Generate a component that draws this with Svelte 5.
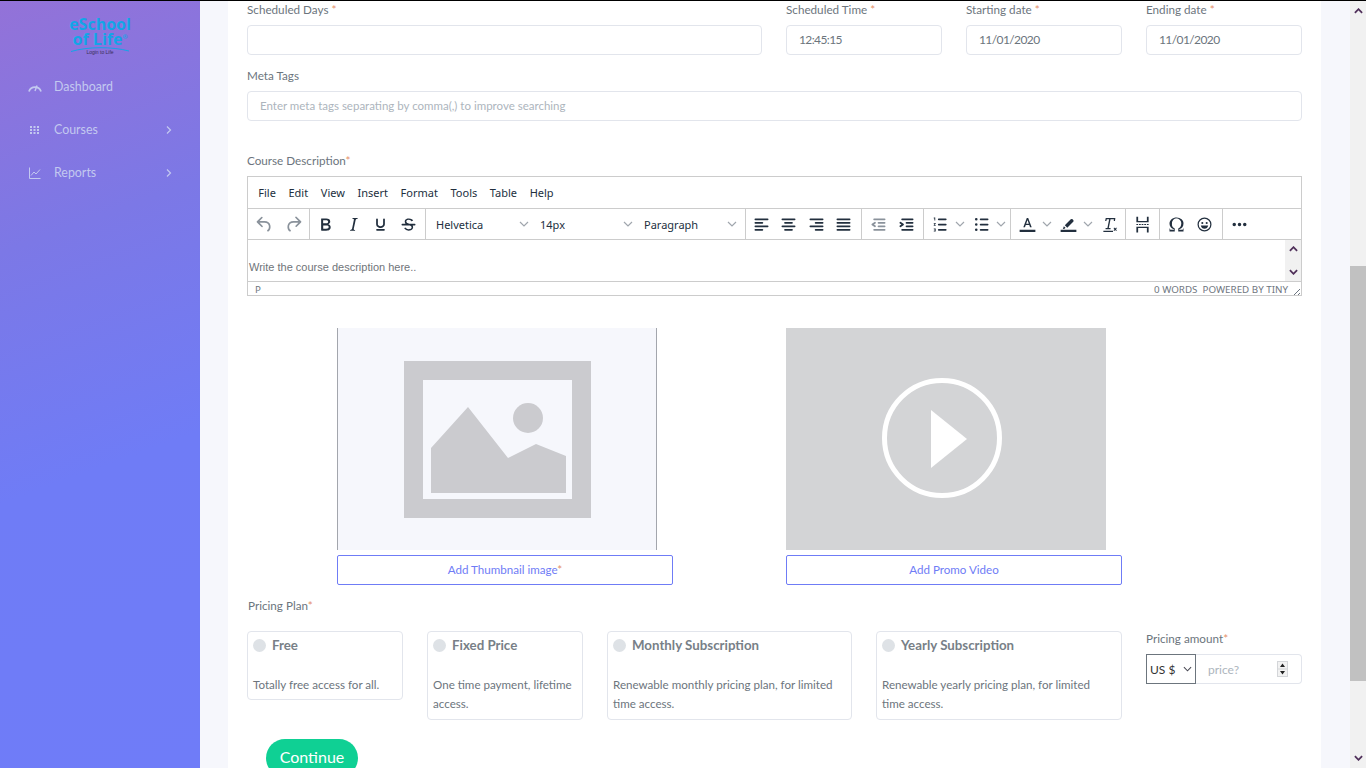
<script>
  const nav = [
    { label: "Dashboard", icon: "gauge" },
    { label: "Courses", icon: "grid", arrow: true },
    { label: "Reports", icon: "chart", arrow: true },
  ];

  const menus = ["File", "Edit", "View", "Insert", "Format", "Tools", "Table", "Help"];

  const plans = [
    { title: "Free", text: "Totally free access for all.", cls: "small" },
    { title: "Fixed Price", text: "One time payment, lifetime access.", cls: "small" },
    { title: "Monthly Subscription", text: "Renewable monthly pricing plan, for limited time access.", cls: "wide" },
    { title: "Yearly Subscription", text: "Renewable yearly pricing plan, for limited time access.", cls: "wider" },
  ];

  // tinymce style icons, 24x24
  const paths = {
    undo: "M6.4 8H12c3.7 0 6.2 2 6.8 5.1.6 2.7-.4 5.6-2.3 6.8a1 1 0 0 1-1-1.8c1.1-.6 1.8-2.7 1.4-4.6-.5-2.1-2.1-3.5-4.9-3.5H6.4l3.3 3.3a1 1 0 1 1-1.4 1.4l-5-5a1 1 0 0 1 0-1.4l5-5a1 1 0 0 1 1.4 1.4L6.4 8Z",
    redo: "M17.6 10H12c-2.8 0-4.4 1.4-4.9 3.5-.4 2 .3 4 1.4 4.6a1 1 0 1 1-1 1.8c-2-1.2-2.9-4.1-2.3-6.8.6-3 3-5.1 6.8-5.1h5.6l-3.3-3.3a1 1 0 1 1 1.4-1.4l5 5a1 1 0 0 1 0 1.4l-5 5a1 1 0 0 1-1.4-1.4l3.3-3.3Z",
    bold: "M7.8 19c-.3 0-.5 0-.6-.2l-.2-.5V5.7c0-.2 0-.4.2-.5l.6-.2h5c1.5 0 2.7.3 3.5 1 .7.6 1.1 1.4 1.1 2.5a3 3 0 0 1-.6 1.9c-.4.6-1 1-1.6 1.2.4.1.9.3 1.3.6s.8.7 1 1.2c.3.4.4 1 .4 1.6 0 1.3-.4 2.3-1.3 3-.8.7-2.1 1-3.8 1H7.8Zm5-8.3c.6 0 1.2-.1 1.6-.5.4-.3.6-.7.6-1.3 0-1.1-.8-1.7-2.3-1.7H9.3v3.5h3.4Zm.5 6c.7 0 1.3-.1 1.7-.4.4-.4.6-.9.6-1.5s-.2-1-.7-1.4c-.4-.3-1-.4-2-.4H9.4v3.8h4Z",
    italic: "m16.7 4.7-.1.9h-.3c-.6 0-1 0-1.4.3-.3.3-.4.6-.5 1.1l-2.1 9.8v.6c0 .5.4.8 1.4.8h.2l-.2.8H8l.2-.8h.2c1.1 0 1.8-.5 2-1.5l2-9.8.1-.5c0-.6-.4-.8-1.4-.8h-.3l.2-.9h5.8Z",
    underline: "M16 5c.6 0 1 .4 1 1v5.5a4 4 0 0 1-.4 1.8l-1 1.4a5.3 5.3 0 0 1-5.5 1 5 5 0 0 1-1.6-1c-.5-.4-.8-.9-1.1-1.4a4 4 0 0 1-.4-1.8V6c0-.6.4-1 1-1s1 .4 1 1v5.5c0 .3 0 .6.2 1l.6.7a3.3 3.3 0 0 0 2.2.8 3.4 3.4 0 0 0 2.2-.8c.3-.2.4-.5.6-.8l.2-.9V6c0-.6.4-1 1-1ZM8 17h8c.6 0 1 .4 1 1s-.4 1-1 1H8a1 1 0 0 1 0-2Z",
    strike: "M15.6 8.5c-.5-.7-1-1.1-1.3-1.3-.6-.4-1.3-.6-2-.6-2.7 0-2.8 1.7-2.8 2.1 0 1.6 1.8 2 3.2 2.3 4.4.9 4.6 2.8 4.6 3.9 0 1.4-.7 4.1-5 4.1A6.2 6.2 0 0 1 7 16.4l1.5-1.1c.4.6 1.6 2 3.7 2 1.6 0 2.5-.4 3-1 .3-.4.3-.9.3-1.2 0-1.4-1.3-2-3.2-2.3-2-.4-4.6-1.4-4.6-4 0-1.7 1-3.7 4.7-3.7 1.3 0 2.4.2 3.4.9.7.4 1.2 1 1.5 1.5l-1.7.9ZM5 11h14a1 1 0 0 1 0 2H5a1 1 0 0 1 0-2Z",
    left: "M5 5h14c.6 0 1 .4 1 1s-.4 1-1 1H5a1 1 0 1 1 0-2Zm0 4h8c.6 0 1 .4 1 1s-.4 1-1 1H5a1 1 0 1 1 0-2Zm0 8h8c.6 0 1 .4 1 1s-.4 1-1 1H5a1 1 0 0 1 0-2Zm0-4h14c.6 0 1 .4 1 1s-.4 1-1 1H5a1 1 0 0 1 0-2Z",
    center: "M5 5h14c.6 0 1 .4 1 1s-.4 1-1 1H5a1 1 0 1 1 0-2Zm3 4h8c.6 0 1 .4 1 1s-.4 1-1 1H8a1 1 0 1 1 0-2Zm0 8h8c.6 0 1 .4 1 1s-.4 1-1 1H8a1 1 0 0 1 0-2Zm-3-4h14c.6 0 1 .4 1 1s-.4 1-1 1H5a1 1 0 0 1 0-2Z",
    right: "M5 5h14c.6 0 1 .4 1 1s-.4 1-1 1H5a1 1 0 1 1 0-2Zm6 4h8c.6 0 1 .4 1 1s-.4 1-1 1h-8a1 1 0 0 1 0-2Zm0 8h8c.6 0 1 .4 1 1s-.4 1-1 1h-8a1 1 0 0 1 0-2Zm-6-4h14c.6 0 1 .4 1 1s-.4 1-1 1H5a1 1 0 0 1 0-2Z",
    justify: "M5 5h14c.6 0 1 .4 1 1s-.4 1-1 1H5a1 1 0 1 1 0-2Zm0 4h14c.6 0 1 .4 1 1s-.4 1-1 1H5a1 1 0 1 1 0-2Zm0 4h14c.6 0 1 .4 1 1s-.4 1-1 1H5a1 1 0 0 1 0-2Zm0 4h14c.6 0 1 .4 1 1s-.4 1-1 1H5a1 1 0 0 1 0-2Z",
    outdent: "M7 5h12c.6 0 1 .4 1 1s-.4 1-1 1H7a1 1 0 1 1 0-2Zm5 4h7c.6 0 1 .4 1 1s-.4 1-1 1h-7a1 1 0 0 1 0-2Zm0 4h7c.6 0 1 .4 1 1s-.4 1-1 1h-7a1 1 0 0 1 0-2Zm-5 4h12a1 1 0 0 1 0 2H7a1 1 0 0 1 0-2Zm1.6-3.8a1 1 0 0 1-1.2 1.6l-3-2a1 1 0 0 1 0-1.6l3-2a1 1 0 0 1 1.2 1.6L6.8 12l1.8 1.2Z",
    indent: "M7 5h12c.6 0 1 .4 1 1s-.4 1-1 1H7a1 1 0 1 1 0-2Zm5 4h7c.6 0 1 .4 1 1s-.4 1-1 1h-7a1 1 0 0 1 0-2Zm0 4h7c.6 0 1 .4 1 1s-.4 1-1 1h-7a1 1 0 0 1 0-2Zm-5 4h12a1 1 0 0 1 0 2H7a1 1 0 0 1 0-2Zm-2.6-3.8L6.2 12l-1.8-1.2a1 1 0 0 1 1.2-1.6l3 2a1 1 0 0 1 0 1.6l-3 2a1 1 0 1 1-1.2-1.6Z",
    numlist: "M10 17h8c.6 0 1 .4 1 1s-.4 1-1 1h-8a1 1 0 0 1 0-2Zm0-6h8c.6 0 1 .4 1 1s-.4 1-1 1h-8a1 1 0 0 1 0-2Zm0-6h8c.6 0 1 .4 1 1s-.4 1-1 1h-8a1 1 0 1 1 0-2ZM6 4v3.5H5V5h-.7V4H6Zm-1.7 6.2H6.5v.8L5.3 12.600h1.200v.9H4.300v-.8l1.200-1.600h-1.200v-.9Zm0 6.300h2.200v3.500H4.300v-.9h1.200v-.4h-.8v-.8h.8v-.5H4.300v-.9Z",
    bullist: "M11 5h8c.6 0 1 .4 1 1s-.4 1-1 1h-8a1 1 0 0 1 0-2Zm0 6h8c.6 0 1 .4 1 1s-.4 1-1 1h-8a1 1 0 0 1 0-2Zm0 6h8c.6 0 1 .4 1 1s-.4 1-1 1h-8a1 1 0 0 1 0-2ZM4.500 6a1.500 1.500 0 1 1 3 0 1.500 1.500 0 0 1-3 0Zm0 6a1.500 1.500 0 1 1 3 0 1.500 1.500 0 0 1-3 0Zm0 6a1.500 1.500 0 1 1 3 0 1.500 1.500 0 0 1-3 0Z",
    forecolor: "M3 18h18v2.500H3V18Zm8.200-13.500h1.600l4 10.500h-1.900l-.9-2.500H10l-.9 2.500H7.200l4-10.500Zm-.7 6.500h3l-1.500-4.200-1.500 4.200Z",
    hilite: "M3 18h18v2.500H3V18Zm2.500-1 2-.1 1.100-1.100-1.900-1.900-1.200 3.100Zm2.300-4.100 2.800 2.800 6.800-6.800a1.500 1.500 0 0 0 0-2.100l-.7-.7a1.500 1.500 0 0 0-2.100 0l-6.800 6.800Z",
    clear: "M13.200 6 11.200 16h2v1.500H7.500V16h2.100l2-10H8.900l-.5 2H7l.7-3.500h11l-.4 3.500h-1.400l.1-2h-3.800ZM5 19.200h11v1.300H5v-1.300Zm12.400-3.700 1.100 1.100 1.100-1.100.8.8-1.100 1.100 1.100 1.100-.8.8-1.100-1.100-1.100 1.100-.8-.8 1.100-1.100-1.100-1.100.8-.8Z",
    pagebreak: "M5 3h2v5h10V3h2v6.500H5V3Zm0 18h2v-5h10v5h2v-6.500H5V21Zm0-9.700h2v1.400H5v-1.400Zm3 0h2v1.400H8v-1.400Zm3 0h2v1.400h-2v-1.400Zm3 0h2v1.400h-2v-1.400Zm3 0h2v1.400h-2v-1.400Z",
    omega: "M15 18h4l1-2v4h-6v-3.300l1.400-1a6 6 0 0 0 1.800-2.900 6.300 6.300 0 0 0-.1-4.100 5.800 5.800 0 0 0-3-3.200c-.6-.3-1.300-.5-2.100-.5a5.100 5.100 0 0 0-3.900 1.800 6.300 6.300 0 0 0-1.300 6 6.200 6.200 0 0 0 1.800 3l1.400.9V20H4v-4l1 2h4v-.5l-2-1L5.400 15A6.500 6.500 0 0 1 4 11c0-1 .2-1.900.6-2.700A7 7 0 0 1 6.300 6C7.100 5.400 8 5 9 4.500c1-.3 2-.5 3.100-.5a8.800 8.800 0 0 1 5.700 2 7 7 0 0 1 1.700 2.300 6 6 0 0 1 .2 4.800c-.2.700-.6 1.300-1 1.900a7.600 7.600 0 0 1-3.600 2.500v.5Z",
    smile: "M12 20a8 8 0 1 1 0-16 8 8 0 0 1 0 16Zm0-1.400a6.600 6.600 0 1 0 0-13.200 6.600 6.600 0 0 0 0 13.200ZM9.500 11.500a1.200 1.200 0 1 1 0-2.400 1.200 1.200 0 0 1 0 2.400Zm5 0a1.200 1.200 0 1 1 0-2.400 1.200 1.200 0 0 1 0 2.400ZM7.800 13h8.400c-.3 2.300-2 3.800-4.200 3.800S8.100 15.300 7.800 13Z",
    more: "M6 10a2 2 0 1 1 0 4 2 2 0 0 1 0-4Zm6 0a2 2 0 1 1 0 4 2 2 0 0 1 0-4Zm6 0a2 2 0 1 1 0 4 2 2 0 0 1 0-4Z",
  };

  const groups = [
    { cls: "g-hist", items: [{ p: "undo", off: true }, { p: "redo", off: true }] },
    { cls: "g-fmt", items: [{ p: "bold" }, { p: "italic" }, { p: "underline" }, { p: "strike" }] },
    { cls: "g-select", selects: ["Helvetica", "14px", "Paragraph"] },
    { cls: "g-align", items: [{ p: "left" }, { p: "center" }, { p: "right" }, { p: "justify" }] },
    { cls: "g-indent", items: [{ p: "outdent", off: true }, { p: "indent" }] },
    { cls: "g-list", items: [{ p: "numlist", split: true }, { p: "bullist", split: true }] },
    { cls: "g-color", items: [{ p: "forecolor", split: true }, { p: "hilite", split: true }, { p: "clear" }] },
    { cls: "g-break", items: [{ p: "pagebreak" }] },
    { cls: "g-char", items: [{ p: "omega" }, { p: "smile" }] },
    { cls: "g-more", items: [{ p: "more" }] },
  ];
</script>

<div class="page">
  <div class="topline"></div>
  <div class="shell">
    <aside class="sidebar">
      <div class="logo">
        <div class="logo-name">eSchool</div>
        <div class="logo-name">of Life<sup>®</sup></div>
        <svg class="swoosh" viewBox="0 0 60 6" width="60" height="6">
          <path d="M1 5.500C18 .5 42 .5 59 5" fill="none" stroke="#12a5e8" stroke-width="1" />
        </svg>
        <div class="logo-sub">Login to Life</div>
      </div>
      <nav class="nav">
        {#each nav as item}
          <div class="nav-item">
            <svg class="nav-icon" viewBox="0 0 14 14" width="14" height="14" fill="none" stroke="currentColor">
              {#if item.icon === "gauge"}
                <path d="M1 11.500a6.300 6.300 0 0 1 12 0" stroke-width="1.800" />
                <path d="M7 11 9 5.500" stroke-width="1.400" />
              {:else if item.icon === "grid"}
                <path d="M2 4h10M2 7h10M2 10h10" stroke-width="1.800" stroke-dasharray="2 1.500" />
              {:else}
                <path d="M1.500 1.500v11h11" stroke-width="1" />
                <path d="M3 9.500 6 6l2 2 4-4.500" stroke-width="1" />
              {/if}
            </svg>
            <span class="nav-label">{item.label}</span>
            {#if item.arrow}
              <svg class="nav-arrow" viewBox="0 0 8 10" width="8" height="10">
                <path d="M2 1.500 5.500 5 2 8.500" fill="none" stroke="currentColor" stroke-width="1.200" />
              </svg>
            {/if}
          </div>
        {/each}
      </nav>
    </aside>

    <main class="main">
      <div class="card">
        <div class="row-schedule">
          <div class="field">
            <div class="label">Scheduled Days <span class="req">*</span></div>
            <div class="input"></div>
          </div>
          <div class="field">
            <div class="label">Scheduled Time <span class="req">*</span></div>
            <div class="input date">12:45:15</div>
          </div>
          <div class="field">
            <div class="label">Starting date <span class="req">*</span></div>
            <div class="input date">11/01/2020</div>
          </div>
          <div class="field">
            <div class="label">Ending date <span class="req">*</span></div>
            <div class="input date">11/01/2020</div>
          </div>
        </div>

        <div class="field meta">
          <div class="label">Meta Tags</div>
          <div class="input placeholder">Enter meta tags separating by comma(,) to improve searching</div>
        </div>

        <div class="field desc">
          <div class="label">Course Description<span class="req">*</span></div>
          <div class="editor">
            <div class="menubar">
              {#each menus as m}
                <span class="menu">{m}</span>
              {/each}
            </div>
            <div class="toolbar">
              {#each groups as g}
                <div class="tgroup {g.cls}">
                  {#if g.selects}
                    {#each g.selects as s}
                      <div class="tselect">
                        <span>{s}</span>
                        <svg viewBox="0 0 10 6" width="10" height="6"><path d="M1 1l4 4 4-4" fill="none" stroke="#a0a6ad" stroke-width="1.200" /></svg>
                      </div>
                    {/each}
                  {:else}
                    {#each g.items as it}
                      <div class="tbtn" class:split={it.split} class:off={it.off}>
                        <svg viewBox="0 0 24 24" width="21" height="21"><path d={paths[it.p]} fill="currentColor" /></svg>
                        {#if it.split}
                          <svg class="chev" viewBox="0 0 10 6" width="10" height="6"><path d="M1 1l4 4 4-4" fill="none" stroke="#a0a6ad" stroke-width="1.200" /></svg>
                        {/if}
                      </div>
                    {/each}
                  {/if}
                </div>
              {/each}
            </div>
            <div class="edit-area">
              <div class="edit-text">Write the course description here..</div>
              <div class="edit-scroll">
                <svg viewBox="0 0 10 6" width="9" height="6"><path d="M1 5l4-4 4 4" fill="none" stroke="#50305a" stroke-width="2" /></svg>
                <svg viewBox="0 0 10 6" width="9" height="6"><path d="M1 1l4 4 4-4" fill="none" stroke="#50305a" stroke-width="2" /></svg>
              </div>
            </div>
            <div class="statusbar">
              <span class="path">P</span>
              <span class="status-right">0 WORDS</span>
              <span class="status-brand">POWERED BY TINY</span>
              <svg class="grip" viewBox="0 0 9 9" width="9" height="9"><path d="M8 2 2 8M8 6 6 8" stroke="#6b7480" stroke-width="1" fill="none" /></svg>
            </div>
          </div>
        </div>

        <div class="media-row">
          <div class="media-col thumb-col">
            <div class="thumb">
              <svg viewBox="0 0 318 222" width="318" height="222">
                <path fill="#cbcbcf" fill-rule="evenodd" d="M66 33h187v157H66V33Zm19 19v119h149V52H85Z" />
                <path fill="#cbcbcf" d="M93 120l37-41 40 51 28-14 30 12v37H93Z" />
                <circle cx="190" cy="90" r="15" fill="#cbcbcf" />
              </svg>
            </div>
            <div class="add-btn">Add Thumbnail image<span class="req">*</span></div>
          </div>
          <div class="media-col">
            <div class="video">
              <svg viewBox="0 0 320 222" width="320" height="222">
                <circle cx="156" cy="110" r="57.500" fill="none" stroke="#fff" stroke-width="5" />
                <path d="M145 82l36 29-36 29Z" fill="#fff" />
              </svg>
            </div>
            <div class="add-btn">Add Promo Video</div>
          </div>
        </div>

        <div class="label pricing-label">Pricing Plan<span class="req">*</span></div>
        <div class="pricing-row">
          {#each plans as plan}
            <div class="plan {plan.cls}">
              <div class="plan-head">
                <span class="radio"></span>
                <span class="plan-title">{plan.title}</span>
              </div>
              <div class="plan-text">{plan.text}</div>
            </div>
          {/each}
          <div class="amount">
            <div class="label amount-label">Pricing amount<span class="req">*</span></div>
            <div class="amount-group">
              <div class="currency">
                <span>US $</span>
                <svg viewBox="0 0 10 6" width="9" height="6"><path d="M1 1l4 4 4-4" fill="none" stroke="#4a4a55" stroke-width="1.200" /></svg>
              </div>
              <div class="price">
                <span>price?</span>
                <div class="spin">
                  <svg viewBox="0 0 11 16" width="11" height="16">
                    <rect width="11" height="16" fill="#d4d6d9" />
                    <rect x="1" y="1" width="9" height="6.500" fill="#f2f2f2" />
                    <rect x="1" y="8.500" width="9" height="6.500" fill="#f2f2f2" />
                    <path d="M5.500 2.500 8 6H3ZM5.500 13.500 8 10H3Z" fill="#222" />
                  </svg>
                </div>
              </div>
            </div>
          </div>
        </div>

        <div class="continue">Continue</div>
      </div>
    </main>

    <div class="scrollbar">
      <svg class="sb-up" viewBox="0 0 10 6" width="9" height="6"><path d="M1 5l4-4 4 4" fill="none" stroke="#50305a" stroke-width="2" /></svg>
      <div class="sb-thumb"></div>
      <svg class="sb-down" viewBox="0 0 10 6" width="9" height="6"><path d="M1 1l4 4 4-4" fill="none" stroke="#50305a" stroke-width="2" /></svg>
    </div>
  </div>
</div>

<style>
  :global(html), :global(body) {
    margin: 0;
    height: 768px;
    overflow: hidden;
  }

  .page {
    height: 768px;
    overflow: hidden;
    display: flex;
    flex-direction: column;
    font-family: "Lato", "Open Sans", sans-serif;
    color: #6c757d;
    background: #f6f7fc;
  }

  .topline {
    height: 1px;
    flex: none;
    background: #000;
  }

  .shell {
    flex: 1;
    min-height: 0;
    display: flex;
  }

  /* sidebar */
  .sidebar {
    width: 200px;
    flex: none;
    background: linear-gradient(160deg, #9372d8 0%, #7c78e6 30%, #6f7cf6 60%, #6f7cf8 100%);
    color: #c3c9f0;
  }

  .logo {
    padding-top: 16px;
    display: flex;
    flex-direction: column;
    align-items: center;
    color: #12a5e8;
    height: 40px;
  }

  .logo-name {
    font-size: 16px;
    font-weight: 700;
    line-height: 15px;
    font-family: "Open Sans", sans-serif;
  }

  .logo-name sup {
    font-size: 6px;
    line-height: 0;
  }

  .swoosh {
    margin-top: -1px;
  }

  .logo-sub {
    font-size: 5px;
    line-height: 5px;
    margin-top: -2px;
    color: #3a2f55;
    font-family: "Liberation Sans", sans-serif;
  }

  .nav {
    padding-top: 8px;
  }

  .nav-item {
    height: 43px;
    display: flex;
    align-items: center;
    padding-left: 28px;
    font-size: 12.400px;
    position: relative;
  }

  .nav-icon {
    flex: none;
    margin-right: 12px;
  }

  .nav-arrow {
    margin-left: auto;
    margin-right: 27px;
  }

  /* main card */
  .main {
    flex: 1;
    min-width: 0;
    padding: 0 29px 0 28px;
  }

  .card {
    background: #fff;
    height: 100%;
    padding: 0 19px;
    box-sizing: border-box;
    overflow: hidden;
  }

  .row-schedule {
    display: grid;
    grid-template-columns: 515px 156px 156px 156px;
    column-gap: 24px;
  }

  .label {
    font-size: 11.700px;
    line-height: 15px;
    color: #6c757d;
    margin-bottom: 9px;
  }

  .row-schedule .label {
    padding-top: 1px;
    margin-bottom: 8px;
  }

  .req {
    color: #e58f6b;
  }

  .input {
    height: 30px;
    box-sizing: border-box;
    border: 1px solid #e2e5ec;
    border-radius: 4px;
    padding: 0 12px;
    font-size: 12px;
    line-height: 28px;
    color: #6c757d;
  }

  .date {
    letter-spacing: -0.600px;
  }

  .placeholder {
    font-size: 11.500px;
    color: #adb5bd;
  }

  .meta {
    margin-top: 13px;
  }

  .meta .label {
    margin-bottom: 8px;
  }

  .desc {
    margin-top: 32px;
  }

  .desc .label {
    margin-bottom: 8px;
  }

  /* editor */
  .editor {
    border: 1px solid #ccc;
    height: 120px;
    box-sizing: border-box;
    display: flex;
    flex-direction: column;
    font-family: "Noto Sans", sans-serif;
    color: #222f3e;
  }

  .menubar {
    height: 31px;
    flex: none;
    display: flex;
    align-items: center;
    padding-left: 4px;
    font-size: 11px;
    border-bottom: 1px solid #ccc;
    box-sizing: content-box;
  }

  .menu {
    padding: 0 6.300px;
  }

  .toolbar {
    height: 30px;
    flex: none;
    display: flex;
    border-bottom: 1px solid #ccc;
  }

  .tgroup {
    display: flex;
    align-items: center;
    padding: 0 2px;
    border-right: 1px solid #ccc;
    box-sizing: border-box;
  }

  .tgroup:last-child {
    border-right: 0;
  }

  .g-hist { width: 62px; }
  .g-fmt { width: 116px; }
  .g-select { width: 320px; }
  .g-align { width: 116px; }
  .g-indent { width: 62px; }
  .g-list { width: 87px; }
  .g-color { width: 115px; }
  .g-break { width: 34px; }
  .g-char { width: 63px; }

  .tbtn {
    width: 28px;
    height: 30px;
    flex: none;
    display: flex;
    align-items: center;
    justify-content: center;
    color: #222f3e;
  }

  .g-hist .tbtn { width: 29px; }
  .g-fmt .tbtn { width: 27.500px; }
  .g-align .tbtn { width: 27.250px; }

  .tbtn.off {
    color: #8a929b;
  }

  .tbtn.split {
    width: 41px;
    justify-content: flex-start;
    padding-left: 3.500px;
    box-sizing: border-box;
  }

  .chev {
    margin-left: 4.500px;
  }

  .tselect {
    width: 104px;
    flex: none;
    display: flex;
    align-items: center;
    justify-content: space-between;
    padding: 0 3px 0 8px;
    box-sizing: border-box;
    font-size: 11px;
  }

  .edit-area {
    flex: 1;
    min-height: 0;
    display: flex;
    justify-content: space-between;
  }

  .edit-text {
    font-family: "Liberation Sans", sans-serif;
    font-size: 11px;
    color: #6f7479;
    padding: 20px 0 0 1px;
    line-height: 14px;
  }

  .edit-scroll {
    width: 16px;
    background: #f1f1f1;
    display: flex;
    flex-direction: column;
    align-items: center;
    justify-content: space-between;
    padding: 6px 0;
    box-sizing: border-box;
  }

  .statusbar {
    height: 13px;
    flex: none;
    border-top: 1px solid #ccc;
    display: flex;
    align-items: center;
    font-size: 9.800px;
    color: #6f7680;
    padding: 1px 0 0 7px;
    position: relative;
    box-sizing: content-box;
    margin-bottom: -1px;
  }

  .status-right {
    margin-left: auto;
    margin-right: 5px;
  }

  .status-brand {
    margin-right: 13px;
  }

  .grip {
    position: absolute;
    right: 0;
    bottom: 0;
  }

  /* thumbnail + video */
  .media-row {
    margin-top: 32px;
    display: grid;
    grid-template-columns: 539px 336px;
  }

  .thumb-col {
    padding-left: 90px;
  }

  .thumb {
    width: 320px;
    height: 222px;
    box-sizing: border-box;
    background: #f6f7fc;
    border-left: 1px solid #a3a6ad;
    border-right: 1px solid #a3a6ad;
  }

  .thumb svg,
  .video svg {
    display: block;
  }

  .video {
    width: 320px;
    height: 222px;
    background: #d3d4d6;
  }

  .add-btn {
    margin-top: 5px;
    width: 336px;
    height: 30px;
    box-sizing: border-box;
    border: 1px solid #6f7cf6;
    border-radius: 2px;
    text-align: center;
    font-size: 11.600px;
    line-height: 28px;
    color: #6f7cf6;
  }

  /* pricing */
  .pricing-label {
    margin-top: 13px;
    margin-bottom: 18px;
    padding-left: 1px;
  }

  .pricing-row {
    display: flex;
    align-items: flex-start;
    gap: 24px;
  }

  .plan {
    box-sizing: border-box;
    border: 1px solid #e2e5ec;
    border-radius: 4px;
    padding: 4px 5px 6px;
  }

  .plan:first-child {
    padding-bottom: 5px;
  }

  .plan.small {
    width: 156px;
  }

  .plan.wide {
    width: 245px;
    padding-right: 16px;
  }

  .plan.wider {
    width: 246px;
    padding-right: 16px;
  }

  .plan-head {
    display: flex;
    align-items: center;
    height: 18px;
    margin-bottom: 21px;
  }

  .radio {
    width: 13px;
    height: 13px;
    border-radius: 50%;
    background: #dee2e6;
    margin: 0 6px 0 0;
  }

  .plan-title {
    font-size: 13.300px;
    font-weight: 700;
    color: #787f87;
  }

  .plan-text {
    font-size: 11.600px;
    line-height: 19px;
  }

  .amount {
    width: 156px;
    flex: none;
  }

  .amount-label {
    margin-bottom: 8px;
  }

  .amount-group {
    display: flex;
    height: 30px;
  }

  .currency {
    width: 50px;
    box-sizing: border-box;
    border: 1px solid #6c757d;
    display: flex;
    align-items: center;
    justify-content: space-between;
    padding: 0 3px;
    font-size: 12px;
    color: #333;
  }

  .price {
    flex: 1;
    box-sizing: border-box;
    border: 1px solid #e2e5ec;
    border-left: 0;
    border-radius: 0 4px 4px 0;
    display: flex;
    align-items: center;
    justify-content: space-between;
    padding: 0 13px 0 12px;
    font-size: 12px;
    color: #adb5bd;
  }

  .spin {
    display: flex;
  }

  .continue {
    margin: 19px 0 0 19px;
    width: 92px;
    height: 38px;
    border-radius: 20px;
    background: #0fd094;
    color: #fff;
    font-size: 16px;
    line-height: 36px;
    text-align: center;
  }

  /* page scrollbar */
  .scrollbar {
    width: 16px;
    flex: none;
    background: #f1f1f1;
    position: relative;
    display: flex;
    flex-direction: column;
    align-items: center;
  }

  .sb-up {
    margin-top: 7px;
  }

  .sb-thumb {
    position: absolute;
    top: 265px;
    left: 0;
    width: 100%;
    height: 415px;
    background: #c1c1c1;
  }

  .sb-down {
    margin-top: auto;
    margin-bottom: 7px;
  }
</style>
